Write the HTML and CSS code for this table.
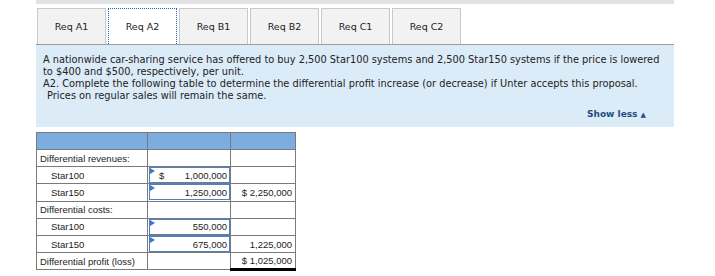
FILE: index.html
```html
<!DOCTYPE html>
<html>
<head>
<meta charset="utf-8">
<link rel="stylesheet" href="styles.css">
</head>
<body>
<div class="wrap">
  <div class="topbar"></div>
  <div class="tabs">
    <div class="tab">Req A1</div>
    <div class="tab active">Req A2</div>
    <div class="tab">Req B1</div>
    <div class="tab">Req B2</div>
    <div class="tab">Req C1</div>
    <div class="tab">Req C2</div>
  </div>
  <div class="desc">
    <p>A nationwide car-sharing service has offered to buy 2,500 Star100 systems and 2,500 Star150 systems if the price is lowered<br>to $400 and $500, respectively, per unit.</p>
    <p>A2. Complete the following table to determine the differential profit increase (or decrease) if Unter accepts this proposal.</p>
    <p class="ind">Prices on regular sales will remain the same.</p>
    <div class="showless">Show less <span class="tri">▲</span></div>
  </div>
  <table class="grid">
    <tr class="head"><td class="c1"></td><td class="c2"></td><td class="c3"></td></tr>
    <tr><td>Differential revenues:</td><td></td><td></td></tr>
    <tr><td class="sub">Star100</td><td class="in"><div class="box"><span class="mk"></span><span class="dol">$</span><span>1,000,000</span></div></td><td></td></tr>
    <tr><td class="sub">Star150</td><td class="in"><div class="box"><span class="mk"></span><span></span><span>1,250,000</span></div></td><td class="num">$ 2,250,000</td></tr>
    <tr><td>Differential costs:</td><td></td><td></td></tr>
    <tr><td class="sub">Star100</td><td class="in"><div class="box"><span class="mk"></span><span></span><span>550,000</span></div></td><td></td></tr>
    <tr><td class="sub">Star150</td><td class="in"><div class="box"><span class="mk"></span><span></span><span>675,000</span></div></td><td class="num">1,225,000</td></tr>
    <tr><td>Differential profit (loss)</td><td></td><td class="num total">$ 1,025,000</td></tr>
  </table>
</div>
</body>
</html>
```
FILE: styles.css
```css
html, body { margin: 0; padding: 0; background: #fff; }
.wrap { margin-left: 36px; width: 638px; }
.topbar { height: 4px; background: #e2e2e2; }
.tabs { display: flex; padding: 4px 0 0 1px; height: 36px; gap: 2px; }
.tab {
  width: 69px; height: 36px; box-sizing: border-box;
  background: #f2f2f2; border: 1px solid #c9c9c9; border-bottom: none;
  font-family: "DejaVu Sans", Verdana, sans-serif; font-size: 9.5px; color: #222;
  display: flex; align-items: center; justify-content: center;
}
.tab.active { background: #fff; border: 1px dotted #2a63b8; border-bottom: none; }
.desc {
  background: #dcebf8; border-top: 1px solid #9c9c9c;
  padding: 9px 7px 6px 7px;
  font-family: "DejaVu Sans", Verdana, sans-serif; font-size: 9.8px; color: #222; line-height: 12px;
  white-space: nowrap;
}
.desc p { margin: 0; }
.desc .ind { padding-left: 4px; }
.showless { text-align: right; margin-top: 6px; padding-right: 21px; font-weight: bold; color: #1d4f80; font-size: 9px; }
.showless .tri { font-size: 7px; }
.grid {
  border-collapse: collapse; margin-top: 5px; width: 260px;
  font-family: "Liberation Sans", Arial, sans-serif; font-size: 9.5px; color: #222;
}
.grid tr { height: 17.2px; }
.grid td { border: 1px solid #7a7a7a; padding: 0 3px; white-space: nowrap; line-height: 11px; }
.grid .head { height: 17px; }
.grid .head td { background: #7badE1; }
.grid .c1 { width: 104px; }
.grid .c2 { width: 76px; }
.grid .sub { padding-left: 14px; }
.grid .in { padding: 0; }
.box {
  position: relative; margin: 0 0 0 1px; height: 14px; border: 1px solid #4f80bf;
  display: flex; justify-content: space-between; align-items: center; padding: 0 2px 0 9px;
}
.mk { position: absolute; left: 0; top: 0; width: 0; height: 0; border-top: 3px solid transparent; border-bottom: 3px solid transparent; border-left: 5px solid #3f78c4; }
.num { text-align: right; }
.total { border-bottom: 3px solid #000 !important; }
```
